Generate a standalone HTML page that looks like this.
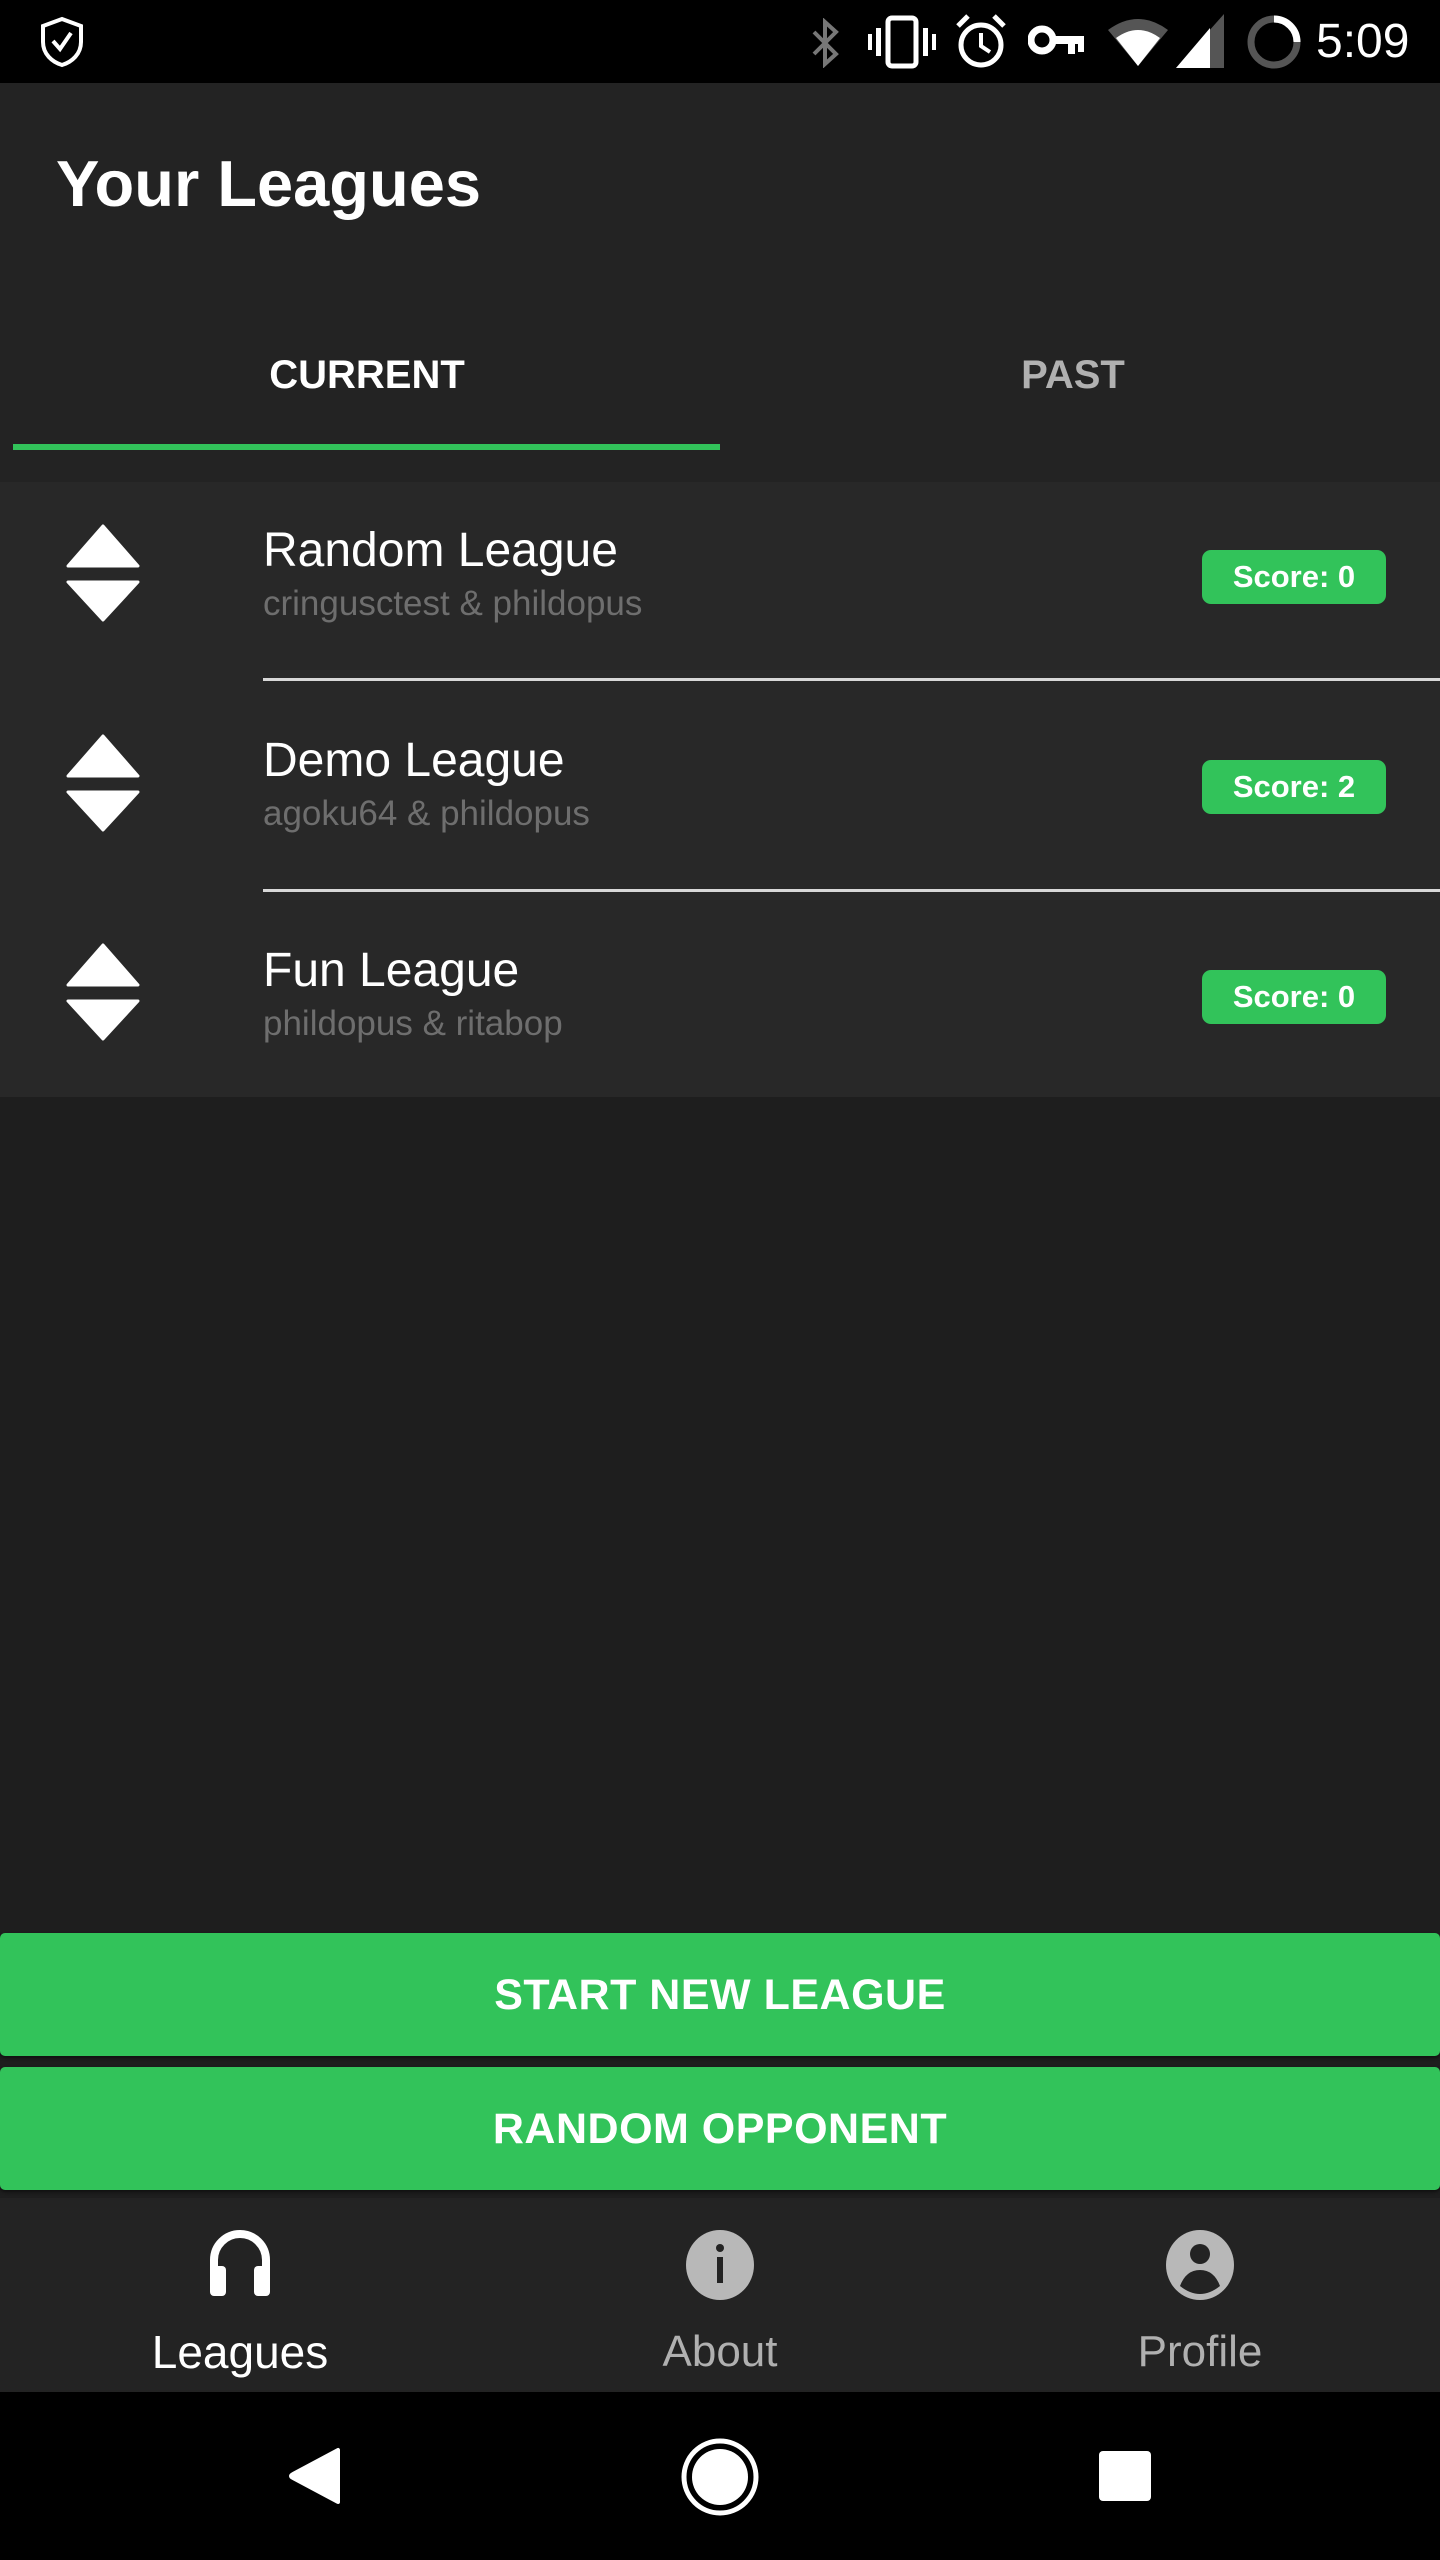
<!DOCTYPE html>
<html><head><meta charset="utf-8"><style>
*{margin:0;padding:0;box-sizing:border-box}
body{width:1440px;height:2560px;background:#1e1e1e;font-family:"Liberation Sans",sans-serif;position:relative;overflow:hidden;color:#fff}
.abs{position:absolute}
#status{left:0;top:0;width:1440px;height:83px;background:#000}
#header{left:0;top:83px;width:1440px;height:399px;background:#232323;box-shadow:0 4px 6px rgba(0,0,0,.35)}
#list{left:0;top:482px;width:1440px;height:615px;background:#282828}
.title{font-size:48px;left:263px}
.sub{font-size:35px;left:263px;color:#6e6e6e}
.div{left:263px;right:0;height:3px;background:#d8d8d8}
.badge{left:1202px;width:184px;height:54px;background:#32c35a;border-radius:9px;font-weight:bold;font-size:31px;text-align:center;line-height:54px}
.btn{left:0;width:1440px;height:123px;background:#32c35a;border-radius:5px;text-align:center;line-height:125px;font-size:43px;font-weight:bold;letter-spacing:0.5px;box-shadow:0 2px 3px rgba(0,0,0,.5)}
#nav{left:0;top:2198px;width:1440px;height:194px;background:#232323}
.lbl{font-size:44px;width:300px;text-align:center;top:2327px}
#sys{left:0;top:2392px;width:1440px;height:168px;background:#000}
</style></head><body>
<div id="status" class="abs">
<svg class="abs" style="left:38px;top:16px" width="48" height="52" viewBox="0 0 48 52"><path d="M24 3 L43 10 V26 C43 38 34 46 24 49 C14 46 5 38 5 26 V10 Z" fill="none" stroke="#fff" stroke-width="4"/><path d="M15 25 L22 33 L33 17" fill="none" stroke="#fff" stroke-width="4"/></svg>
<svg class="abs" style="left:810px;top:18px" width="30" height="50" viewBox="0 0 30 50"><path d="M4 14 L26 36 L15 46 V4 L26 14 L4 36" fill="none" stroke="#777" stroke-width="4"/></svg>
<svg class="abs" style="left:868px;top:14px" width="68" height="56" viewBox="0 0 68 56"><rect x="20" y="4" width="28" height="48" rx="4" fill="none" stroke="#fff" stroke-width="5"/><rect x="8" y="14" width="5" height="28" fill="#fff"/><rect x="55" y="14" width="5" height="28" fill="#fff"/><rect x="0" y="20" width="4" height="16" fill="#fff"/><rect x="64" y="20" width="4" height="16" fill="#fff"/></svg>
<svg class="abs" style="left:954px;top:12px" width="54" height="58" viewBox="0 0 54 58"><circle cx="27" cy="33" r="20" fill="none" stroke="#fff" stroke-width="5"/><path d="M27 21 V34 L36 40" fill="none" stroke="#fff" stroke-width="4"/><path d="M4 14 L14 4 M50 14 L40 4" stroke="#fff" stroke-width="5"/></svg>
<svg class="abs" style="left:1028px;top:24px" width="58" height="36" viewBox="0 0 58 36"><circle cx="14" cy="16" r="11" fill="none" stroke="#fff" stroke-width="7"/><rect x="24" y="12" width="32" height="8" fill="#fff"/><rect x="40" y="18" width="7" height="12" fill="#fff"/><rect x="50" y="18" width="6" height="10" fill="#fff"/></svg>
<svg class="abs" style="left:1108px;top:16px" width="60" height="52" viewBox="0 0 60 52"><path d="M0 14 Q30 -8 60 14 L30 50 Z" fill="#555"/><path d="M8 22 Q30 6 52 22 L30 50 Z" fill="#fff"/></svg>
<svg class="abs" style="left:1176px;top:14px" width="48" height="54" viewBox="0 0 48 54"><path d="M48 0 V54 H0 Z" fill="#555"/><path d="M34 14 V54 H0 Z" fill="#fff"/></svg>
<svg class="abs" style="left:1246px;top:14px" width="56" height="56" viewBox="0 0 56 56"><circle cx="28" cy="28" r="23" fill="none" stroke="#555" stroke-width="7"/><path d="M28 5 A23 23 0 0 1 51 28" fill="none" stroke="#fff" stroke-width="7"/></svg>
<div class="abs" style="left:1316px;top:14px;font-size:48px;color:#fff">5:09</div>
</div>
<div id="header" class="abs">
<div class="abs" style="left:56px;top:63px;font-size:65px;font-weight:bold">Your Leagues</div>
<div class="abs" style="left:0;width:734px;text-align:center;top:270px;font-size:40px;font-weight:bold">CURRENT</div>
<div class="abs" style="left:706px;width:734px;text-align:center;top:270px;font-size:40px;font-weight:bold;color:#b0b0b0">PAST</div>
<div class="abs" style="left:13px;top:361px;width:707px;height:6px;background:#32c35a"></div>
</div>
<div id="list" class="abs"></div>
<svg class="abs" style="left:66px;top:524px" width="74" height="98" viewBox="0 0 74 98"><path d="M37 2 L72 42 H2 Z" fill="#fff" stroke="#fff" stroke-width="3" stroke-linejoin="round"/><path d="M2 58 H72 L37 96 Z" fill="#fff" stroke="#fff" stroke-width="3" stroke-linejoin="round"/></svg>
<div class="abs title" style="top:523px">Random League</div>
<div class="abs sub" style="top:584px">cringusctest &amp; phildopus</div>
<div class="abs badge" style="top:550px">Score: 0</div>
<div class="abs div" style="top:678px"></div>
<svg class="abs" style="left:66px;top:734px" width="74" height="98" viewBox="0 0 74 98"><path d="M37 2 L72 42 H2 Z" fill="#fff" stroke="#fff" stroke-width="3" stroke-linejoin="round"/><path d="M2 58 H72 L37 96 Z" fill="#fff" stroke="#fff" stroke-width="3" stroke-linejoin="round"/></svg>
<div class="abs title" style="top:733px">Demo League</div>
<div class="abs sub" style="top:794px">agoku64 &amp; phildopus</div>
<div class="abs badge" style="top:760px">Score: 2</div>
<div class="abs div" style="top:889px"></div>
<svg class="abs" style="left:66px;top:943px" width="74" height="98" viewBox="0 0 74 98"><path d="M37 2 L72 42 H2 Z" fill="#fff" stroke="#fff" stroke-width="3" stroke-linejoin="round"/><path d="M2 58 H72 L37 96 Z" fill="#fff" stroke="#fff" stroke-width="3" stroke-linejoin="round"/></svg>
<div class="abs title" style="top:943px">Fun League</div>
<div class="abs sub" style="top:1004px">phildopus &amp; ritabop</div>
<div class="abs badge" style="top:970px">Score: 0</div>

<div class="abs btn" style="top:1933px">START NEW LEAGUE</div>
<div class="abs btn" style="top:2067px">RANDOM OPPONENT</div>

<div id="nav" class="abs"></div>
<svg class="abs" style="left:206px;top:2222px" width="68" height="76" viewBox="0 0 68 76"><path d="M8 70 V38 A26 26 0 0 1 60 38 V70" fill="none" stroke="#fff" stroke-width="8"/><rect x="4" y="44" width="16" height="30" rx="4" fill="#fff"/><rect x="48" y="44" width="16" height="30" rx="4" fill="#fff"/></svg>
<svg class="abs" style="left:686px;top:2230px" width="68" height="70" viewBox="0 0 68 70"><ellipse cx="34" cy="35" rx="34" ry="35" fill="#b8b8b8"/><circle cx="34" cy="18" r="4" fill="#232323"/><rect x="31" y="27" width="6" height="26" fill="#232323"/></svg>
<svg class="abs" style="left:1166px;top:2230px" width="68" height="70" viewBox="0 0 68 70"><ellipse cx="34" cy="35" rx="34" ry="35" fill="#b8b8b8"/><circle cx="34" cy="24" r="10" fill="#232323"/><path d="M14 56 Q20 40 34 40 Q48 40 54 56 Q34 72 14 56 Z" fill="#232323"/></svg>
<div class="abs lbl" style="left:90px;color:#fff;font-size:46px;top:2325px">Leagues</div>
<div class="abs lbl" style="left:570px;color:#b0b0b0">About</div>
<div class="abs lbl" style="left:1050px;color:#b0b0b0">Profile</div>

<div id="sys" class="abs"></div>
<svg class="abs" style="left:288px;top:2447px" width="54" height="58" viewBox="0 0 54 58"><path d="M50 3 V55 L5 31 Q1 29 5 27 Z" fill="#fff" stroke="#fff" stroke-width="4" stroke-linejoin="round"/></svg>
<svg class="abs" style="left:678px;top:2435px" width="84" height="84" viewBox="0 0 84 84"><circle cx="42" cy="42" r="36" fill="none" stroke="#fff" stroke-width="5"/><circle cx="42" cy="42" r="28" fill="#fff"/></svg>
<div class="abs" style="left:1099px;top:2451px;width:52px;height:50px;background:#fff;border-radius:4px"></div>
</body></html>
